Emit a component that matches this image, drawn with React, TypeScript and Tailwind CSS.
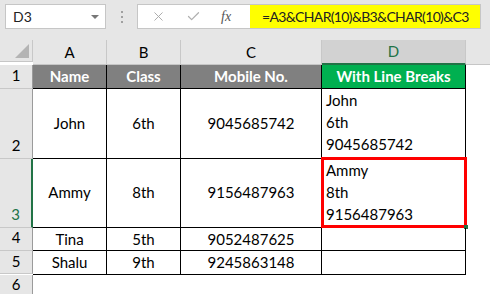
import { X, Check } from 'lucide-react'

const rows = [
    { n: '2', h: 'h-[70px]', name: 'John', cls: '6th', mob: '9045685742' },
    { n: '3', h: 'h-[69px]', name: 'Ammy', cls: '8th', mob: '9156487963' },
    { n: '4', h: 'h-[23px]', name: 'Tina', cls: '5th', mob: '9052487625' },
    { n: '5', h: 'h-[23px]', name: 'Shalu', cls: '9th', mob: '9245863148' },
]

const cell = 'border-r border-b border-black flex items-center justify-center'
const rowHead = 'bg-[#e6e6e6] border-r border-r-[#9b9b9b] border-b border-b-[#c8c8c8] flex items-end justify-center pb-[1px]'
const colHead = 'bg-[#e6e6e6] border-r border-r-[#c8c8c8] border-b border-b-[#c6c6c6] flex items-center justify-center'

export default function App() {
    return (
        <div className="w-[490px] h-[294px] overflow-hidden bg-white text-[15px] text-black font-['Lato','Liberation_Sans',sans-serif]">
            {/* Formula bar */}
            <div className="h-[40px] bg-[#e6e6e6] flex items-start pt-[4px] pl-[5px]">
                <div className="w-[101px] h-[25px] bg-white border border-[#c6c6c6] flex items-center justify-between pl-[7px] pr-[6px] text-[14px] text-[#222]">
                    <span>D3</span>
                    <span className="w-0 h-0 border-l-[4px] border-r-[4px] border-t-[4px] border-l-transparent border-r-transparent border-t-[#777]" />
                </div>
                <div className="w-[31px] h-[25px] flex flex-col items-center justify-center gap-[3px]">
                    <span className="w-[2px] h-[2px] bg-[#a0a0a0]" />
                    <span className="w-[2px] h-[2px] bg-[#a0a0a0]" />
                    <span className="w-[2px] h-[2px] bg-[#a0a0a0]" />
                </div>
                <div className="h-[25px] bg-white border border-[#c6c6c6] flex items-stretch">
                    <div className="w-[112px] flex items-center">
                        <X size={15} strokeWidth={1.5} className="ml-[13px] text-[#a8a8a8]" />
                        <Check size={15} strokeWidth={2} className="ml-[20px] text-[#b0b0b0]" />
                        <span className="ml-[20px] text-[14px] italic text-[#555] font-['Liberation_Serif',serif]">fx</span>
                    </div>
                    <div className="w-[230px] bg-[#ffff00] flex items-center pl-[12px] text-[14px] tracking-[-0.65px] text-[#222] whitespace-nowrap">
                        =A3&amp;CHAR(10)&amp;B3&amp;CHAR(10)&amp;C3
                    </div>
                </div>
            </div>

            {/* Sheet */}
            <div className="grid grid-cols-[33px_74px_74px_141px_144px_1fr]">
                {/* column headers */}
                <div className="h-[22px] bg-[#e6e6e6] border-r border-r-[#c8c8c8] border-b border-b-[#c6c6c6] flex items-end justify-end pr-[3px] pb-[3px]">
                    <svg width="14" height="14" viewBox="0 0 14 14">
                        <path d="M14 0 L14 14 L0 14 Z" fill="#b4b4b4" />
                    </svg>
                </div>
                <div className={colHead}>A</div>
                <div className={colHead}>B</div>
                <div className={colHead}>C</div>
                <div className="bg-[#d2d2d2] border-r border-r-[#c8c8c8] border-b-2 border-b-[#217346] flex items-center justify-center text-[#217346]">D</div>
                <div className="bg-[#e6e6e6] border-b border-b-[#c6c6c6]" />

                {/* row 1 */}
                <div className={`h-[24px] ${rowHead} items-center pb-0`}>1</div>
                <div className={`${cell} bg-[#808080] text-white font-bold`}>Name</div>
                <div className={`${cell} bg-[#808080] text-white font-bold`}>Class</div>
                <div className={`${cell} bg-[#808080] text-white font-bold`}>Mobile No.</div>
                <div className={`${cell} bg-[#00b050] text-white font-bold`}>With Line Breaks</div>
                <div />

                {rows.map((r) => {
                    const active = r.n === '3'
                    const multi = r.n === '2' || r.n === '3'
                    return [
                        <div
                            key={r.n + 'h'}
                            className={`${r.h} ${rowHead} ${active ? 'bg-[#d2d2d2] border-r-2 border-r-[#217346] text-[#217346]' : ''} ${multi ? '' : 'items-center pb-0'}`}
                        >
                            {r.n}
                        </div>,
                        <div key={r.n + 'a'} className={cell}>{r.name}</div>,
                        <div key={r.n + 'b'} className={cell}>{r.cls}</div>,
                        <div key={r.n + 'c'} className={cell}>{r.mob}</div>,
                        <div key={r.n + 'd'} className="relative border-r border-b border-black pl-[4px] leading-[22px]">
                            {multi && (
                                <>
                                    <div>{r.name}</div>
                                    <div>{r.cls}</div>
                                    <div>{r.mob}</div>
                                </>
                            )}
                            {active && (
                                <>
                                    <div className="absolute left-[-1px] top-[-2px] right-[-2px] bottom-[-1px] border-[3px] border-[#ff0000]" />
                                    <div className="absolute right-[-3px] bottom-[-2px] w-[4px] h-[4px] bg-[#217346]" />
                                </>
                            )}
                        </div>,
                        <div key={r.n + 'e'} />,
                    ]
                })}

                {/* row 6 */}
                <div className={`h-[23px] ${rowHead} items-center pb-0`}>6</div>
                <div />
                <div />
                <div />
                <div />
                <div />
            </div>
        </div>
    )
}
